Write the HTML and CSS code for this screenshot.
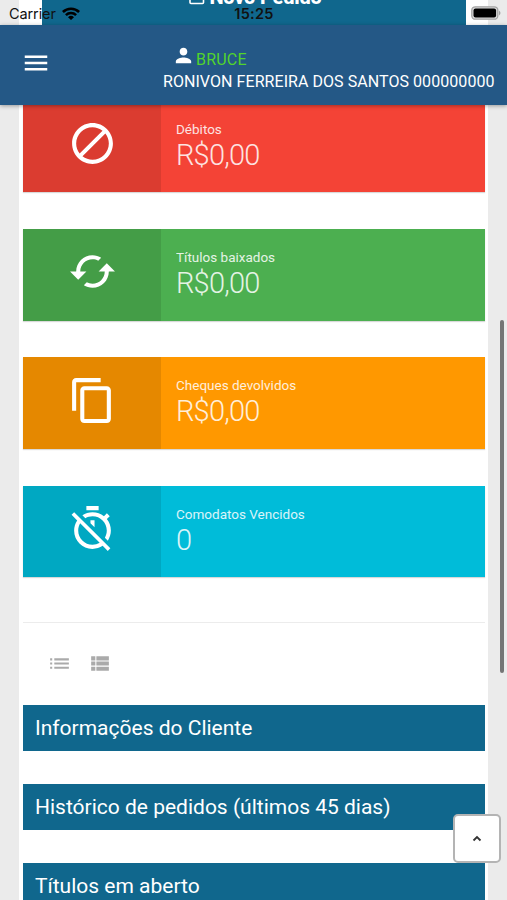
FILE: index.html
```
<!DOCTYPE html>
<html lang="pt-BR">
<head>
    <meta charset="UTF-8">
    <meta name="viewport" content="width=device-width, initial-scale=1.0">
    <title>Cliente</title>
    <link rel="stylesheet" href="styles.css">
</head>
<body>

    <div class="status-bar">
        <div class="new-order">
            <svg class="order-icon" viewBox="0 0 16 16"><rect x="1" y="1" width="13.5" height="13.5" rx="1"/></svg>
            <span>Novo Pedido</span>
        </div>
        <div class="status-info">
            <div class="carrier">
                <span>Carrier</span>
                <svg class="wifi" viewBox="0 0 18 13"><path d="M0 4.1a12.8 12.8 0 0 1 18 0L16.2 6A10.2 10.2 0 0 0 1.8 6zM3 7.2a8.6 8.6 0 0 1 12 0L13.2 9a6 6 0 0 0-8.4 0zM6 10.2a4.3 4.3 0 0 1 6 0L9 13z"/></svg>
            </div>
            <span class="clock">15:25</span>
            <svg class="battery" viewBox="0 0 30 14"><rect x=".8" y=".8" width="26" height="12.4" rx="3.5" fill="#ddd" stroke="#a3a3a3" stroke-width="1.3"/><rect x="2.5" y="2.5" width="22.6" height="9" rx="2"/><path d="M28 4.5q3 2.5 0 5z" fill="#a3a3a3"/></svg>
        </div>
    </div>

    <header class="navbar">
        <svg class="menu" viewBox="0 0 24 24"><path d="M3 18h18v-2H3v2zm0-5h18v-2H3v2zm0-7v2h18V6H3z"/></svg>
        <div class="user">
            <div class="user-login">
                <svg class="person" viewBox="0 0 24 24"><path d="M12 12c2.21 0 4-1.79 4-4s-1.79-4-4-4-4 1.79-4 4 1.79 4 4 4zm0 2c-2.67 0-8 1.34-8 4v2h16v-2c0-2.66-5.33-4-8-4z"/></svg>
                <span>BRUCE</span>
            </div>
            <div class="user-name">RONIVON FERREIRA DOS SANTOS 000000000</div>
        </div>
    </header>

    <main class="page">
        <div class="cards">
            <div class="info-box red">
                <div class="icon">
                    <svg viewBox="0 0 24 24"><path d="M12 2C6.5 2 2 6.5 2 12s4.5 10 10 10 10-4.5 10-10S17.5 2 12 2zM4 12c0-4.4 3.6-8 8-8 1.8 0 3.5.6 4.9 1.7L5.7 16.9C4.6 15.5 4 13.8 4 12zm8 8c-1.8 0-3.5-.6-4.9-1.7L18.3 7.1C19.4 8.5 20 10.2 20 12c0 4.4-3.6 8-8 8z"/></svg>
                </div>
                <div class="content">
                    <div class="text">Débitos</div>
                    <div class="number">R$0,00</div>
                </div>
            </div>
            <div class="info-box green">
                <div class="icon">
                    <svg viewBox="0 0 24 24"><path d="M19 8l-4 4h3c0 3.31-2.69 6-6 6-1.01 0-1.97-.25-2.8-.7l-1.46 1.46C8.97 19.54 10.43 20 12 20c4.42 0 8-3.58 8-8h3l-4-4zM6 12c0-3.31 2.69-6 6-6 1.01 0 1.97.25 2.8.7l1.46-1.46C15.03 4.46 13.57 4 12 4c-4.42 0-8 3.58-8 8H1l4 4 4-4H6z"/></svg>
                </div>
                <div class="content">
                    <div class="text">Títulos baixados</div>
                    <div class="number">R$0,00</div>
                </div>
            </div>
            <div class="info-box orange">
                <div class="icon">
                    <svg viewBox="0 0 24 24"><path d="M16 1H4c-1.1 0-2 .9-2 2v14h2V3h12V1zm3 4H8c-1.1 0-2 .9-2 2v14c0 1.1.9 2 2 2h11c1.1 0 2-.9 2-2V7c0-1.1-.9-2-2-2zm0 16H8V7h11v14z"/></svg>
                </div>
                <div class="content">
                    <div class="text">Cheques devolvidos</div>
                    <div class="number">R$0,00</div>
                </div>
            </div>
            <div class="info-box cyan">
                <div class="icon">
                    <svg viewBox="0 0 24 24"><path d="M19.04 4.55l-1.42 1.42C16.07 4.74 14.12 4 12 4c-1.83 0-3.53.55-4.95 1.48l1.46 1.46C9.53 6.35 10.73 6 12 6c3.87 0 7 3.13 7 7 0 1.27-.35 2.47-.94 3.49l1.45 1.45C20.45 16.53 21 14.83 21 13c0-2.12-.74-4.07-1.97-5.61l1.42-1.42-1.41-1.42zM15 1H9v2h6V1zm-4 8.44l2 2V8h-2v1.44zM3.02 4L1.75 5.27 4.5 8.03C3.55 9.45 3 11.16 3 13c0 4.97 4.02 9 9 9 1.84 0 3.55-.55 4.98-1.5l2.5 2.5 1.27-1.27-7.71-7.71L3.02 4zM12 20c-3.87 0-7-3.13-7-7 0-1.28.35-2.48.95-3.52l9.56 9.56c-1.03.61-2.23.96-3.51.96z"/></svg>
                </div>
                <div class="content">
                    <div class="text">Comodatos Vencidos</div>
                    <div class="number">0</div>
                </div>
            </div>
        </div>

        <div class="view-toggle">
            <svg viewBox="0 0 24 24"><path d="M3 13h2v-2H3v2zm0 4h2v-2H3v2zm0-8h2V7H3v2zm4 4h14v-2H7v2zm0 4h14v-2H7v2zM7 7v2h14V7H7z"/></svg>
            <svg viewBox="0 0 24 24"><path d="M4 14h4v-4H4v4zm0 5h4v-4H4v4zM4 9h4V5H4v4zm5 5h12v-4H9v4zm0 5h12v-4H9v4zM9 5v4h12V5H9z"/></svg>
        </div>

        <div class="panels">
            <div class="panel">Informações do Cliente</div>
            <div class="panel">Histórico de pedidos (últimos 45 dias)</div>
            <div class="panel">Títulos em aberto</div>
        </div>
    </main>

    <div class="scrollbar"></div>
    <button class="to-top" aria-label="Topo">
        <svg viewBox="0 0 10 7"><path d="M1.5 5.5L5 2l3.5 3.5"/></svg>
    </button>

</body>
</html>
```
FILE: styles.css
```
* {
    box-sizing: border-box;
}

body {
    font-family: Roboto, "Liberation Sans", sans-serif;
    background-color: #ebebeb;
    display: flex;
    flex-direction: column;
    height: 900px;
    margin: 0;
    overflow: hidden;
}

svg {
    display: block;
    flex: none;
}

.status-bar {
    position: relative;
    flex: none;
    height: 25px;
    margin: 0 19px;
    padding: 0 22px 0 23px;
    background-color: #fff;
}

.new-order {
    display: flex;
    justify-content: center;
    align-items: flex-end;
    height: 25px;
    padding: 0 0 20px 3px;
    gap: 4px;
    overflow: hidden;
    background-color: #10678d;
    color: #fff;
    font-size: 20px;
    font-weight: 800;
    line-height: 16px;
    letter-spacing: -0.2px;
}

.order-icon {
    width: 16px;
    height: 16px;
    fill: none;
    stroke: #fff;
    stroke-width: 1.6;
}

.status-info {
    position: absolute;
    top: 0;
    left: -19px;
    width: 507px;
    height: 27px;
    padding: 0 6px 0 9px;
    display: grid;
    grid-template-columns: 1fr auto 1fr;
    align-items: center;
    font-family: Inter, sans-serif;
    font-size: 14.5px;
    color: #111;
}

.carrier {
    display: flex;
    align-items: center;
    gap: 6px;
    letter-spacing: -0.1px;
}

.wifi {
    width: 18px;
    height: 13px;
}

.clock {
    margin-right: 2px;
    font-weight: 600;
    letter-spacing: 0.3px;
}

.battery {
    width: 30px;
    height: 14px;
    margin-top: -1px;
    justify-self: end;
}

.navbar {
    position: relative;
    z-index: 1;
    flex: none;
    display: flex;
    justify-content: space-between;
    height: 80px;
    padding: 20px 13px 0 21px;
    background-color: #245886;
    box-shadow: 0 1px 4px rgba(0, 0, 0, 0.35);
    color: #fff;
}

.menu {
    width: 30px;
    height: 36px;
    fill: #fff;
}

.user {
    width: 331px;
    font-size: 16px;
    line-height: 23px;
    white-space: nowrap;
}

.user-login {
    display: flex;
    align-items: center;
    height: 25px;
    padding-left: 10px;
    color: #52d42c;
}

.user-login span {
    padding-top: 3px;
    letter-spacing: 0.2px;
}

.user-name {
    letter-spacing: 0.06px;
}

.person {
    width: 23px;
    height: 25px;
    margin-top: -5px;
    margin-left: -1px;
    margin-right: 1px;
    fill: #fff;
}

.page {
    flex: 1;
    min-height: 0;
    overflow: hidden;
    margin: 0 19px;
    padding: 0 3px 0 4px;
    background-color: #fff;
}

.cards {
    display: flex;
    flex-direction: column;
    gap: 36.7px;
    margin-top: -4.4px;
    padding-bottom: 44.4px;
    border-bottom: 1px solid #ececec;
}

.info-box {
    display: flex;
    height: 91.7px;
    color: #fff;
    box-shadow: 0 1px 1px rgba(0, 0, 0, 0.15);
}

.info-box .icon {
    width: 138px;
    padding-top: 18.5px;
    background-color: rgba(0, 0, 0, 0.1);
}

.info-box .icon svg {
    width: 49px;
    height: 49px;
    margin: 0 auto;
    fill: #fff;
}

.info-box .content {
    padding: 18px 15px 0;
    opacity: 0.85;
}

.info-box .text {
    font-size: 13.5px;
    line-height: 20px;
}

.info-box .number {
    font-size: 29px;
    font-weight: 300;
    line-height: 32px;
    letter-spacing: -0.8px;
}

.red {
    background-color: #f44336;
}

.green {
    background-color: #4caf50;
}

.orange {
    background-color: #ff9800;
}

.cyan {
    background-color: #00bcd9;
}

.view-toggle {
    display: flex;
    gap: 15px;
    padding: 28px 24px 29px;
}

.view-toggle svg {
    width: 25px;
    height: 25px;
    fill: #aaa;
}

.panels {
    display: flex;
    flex-direction: column;
    gap: 33px;
}

.panel {
    flex: none;
    height: 46.3px;
    padding-left: 12px;
    background-color: #10678d;
    color: #fff;
    font-size: 21px;
    line-height: 47px;
    white-space: nowrap;
}

.scrollbar {
    position: absolute;
    top: 320px;
    right: 3px;
    width: 4px;
    height: 353px;
    border-radius: 2px;
    background-color: #757575;
}

.to-top {
    position: absolute;
    top: 814px;
    left: 453px;
    display: flex;
    align-items: center;
    justify-content: center;
    width: 48px;
    height: 49px;
    padding: 0;
    background-color: #fff;
    border: 2px solid #b4b4b4;
    border-radius: 5px;
    z-index: 2;
}

.to-top svg {
    width: 10px;
    height: 7px;
    fill: none;
    stroke: #333;
    stroke-width: 1.8;
}
```
